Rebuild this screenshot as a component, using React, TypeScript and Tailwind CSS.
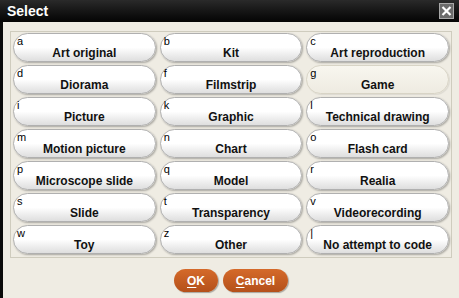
const items: [string, string][] = [
  ['a', 'Art original'],
  ['b', 'Kit'],
  ['c', 'Art reproduction'],
  ['d', 'Diorama'],
  ['f', 'Filmstrip'],
  ['g', 'Game'],
  ['i', 'Picture'],
  ['k', 'Graphic'],
  ['l', 'Technical drawing'],
  ['m', 'Motion picture'],
  ['n', 'Chart'],
  ['o', 'Flash card'],
  ['p', 'Microscope slide'],
  ['q', 'Model'],
  ['r', 'Realia'],
  ['s', 'Slide'],
  ['t', 'Transparency'],
  ['v', 'Videorecording'],
  ['w', 'Toy'],
  ['z', 'Other'],
  ['|', 'No attempt to code'],
]

export default function App() {
  return (
    <div className="w-[459px] h-[298px] flex flex-col bg-[#efece3] font-['Liberation_Sans',Arial,sans-serif] overflow-hidden">
      {/* Title bar */}
      <div className="h-[22px] flex items-center justify-between pl-[7px] pr-[5px] bg-gradient-to-b from-[#2a2a2a] to-[#050505]">
        <span className="text-white font-bold text-[14px] leading-none">Select</span>
        <button className="w-[15px] h-[16px] flex items-center justify-center bg-[#6b6b6b] border border-[#a8a8a8]">
          <svg width="11" height="12" viewBox="0 0 11 12">
            <path d="M1.5 2 L9.5 10 M9.5 2 L1.5 10" stroke="white" strokeWidth="2.2" />
          </svg>
        </button>
      </div>

      <div className="flex-1 flex flex-col border-l-[3px] border-[#0a0a0a]">
        {/* Group box */}
        <div className="mt-[9px] ml-[7px] mr-[7px] h-[227px] border border-[#cfccbe] p-[1px]">
          <div className="grid grid-cols-3 gap-x-[4px] gap-y-[3px] px-[1px]">
            {items.map(([code, label]) => {
              const selected = code === 'g'
              return (
                <button
                  key={code}
                  className={
                    selected
                      ? 'h-[29px] relative rounded-[15px] border border-[#d8d4c6] bg-gradient-to-b from-[#f8f6ef] to-[#eeebe1] shadow-[1px_1px_1px_rgba(0,0,0,0.08)]'
                      : 'h-[29px] relative rounded-[15px] border border-[#b0b0b0] bg-gradient-to-b from-white via-white to-[#dedede] shadow-[1px_1px_2px_rgba(0,0,0,0.3)]'
                  }
                >
                  <span className="absolute left-[3px] top-[1px] text-[11px] leading-[12px] text-black font-normal">
                    {code}
                  </span>
                  <span className="absolute left-0 right-0 top-[12px] text-center text-[12px] leading-[14px] font-bold text-[#111]">
                    {label}
                  </span>
                </button>
              )
            })}
          </div>
        </div>

        {/* Footer buttons */}
        <div className="flex justify-center gap-[5px] mt-[11px]">
          <button className="w-[44px] h-[23px] rounded-full bg-gradient-to-b from-[#d56a2a] to-[#b4501a] text-white font-bold text-[12px] shadow-[1px_1px_1px_rgba(0,0,0,0.3)]">
            <span className="underline underline-offset-2">O</span>K
          </button>
          <button className="w-[65px] h-[23px] rounded-full bg-gradient-to-b from-[#d56a2a] to-[#b4501a] text-white font-bold text-[12px] shadow-[1px_1px_1px_rgba(0,0,0,0.3)]">
            <span className="underline underline-offset-2">C</span>ancel
          </button>
        </div>
      </div>
    </div>
  )
}
